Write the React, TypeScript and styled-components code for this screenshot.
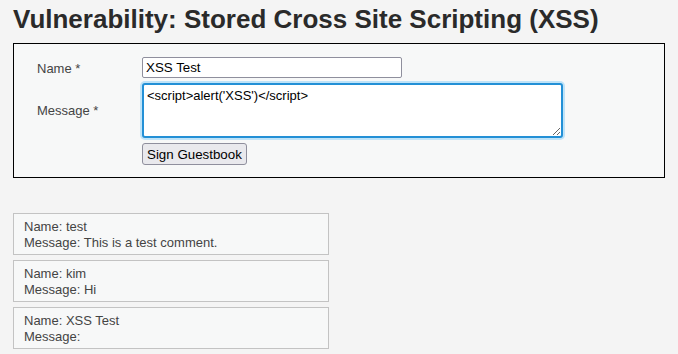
import React, { useEffect, useRef, useState } from "react";
import styled, { createGlobalStyle } from "styled-components";

const GlobalStyle = createGlobalStyle`
  body {
    margin: 0;
    background: #f4f4f4;
    font-family: "Liberation Sans", Arial, sans-serif;
    color: #333;
  }
`;

const entries = [
  { name: "test", message: "This is a test comment." },
  { name: "kim", message: "Hi" },
  { name: "XSS Test", message: "" },
];

function App() {
  const [name, setName] = useState("XSS Test");
  const [message, setMessage] = useState("<script>alert('XSS')</script>");
  const msgRef = useRef<HTMLTextAreaElement>(null);

  // caret sits at the end of the typed payload
  useEffect(() => {
    const el = msgRef.current;
    if (!el) return;
    el.focus();
    el.setSelectionRange(el.value.length, el.value.length);
  }, []);

  return (
    <>
      <GlobalStyle />
      <Page>
        <Title>Vulnerability: Stored Cross Site Scripting (XSS)</Title>

        <CodeArea>
          <FormGrid>
            <Label>Name *</Label>
            <TextInput value={name} onChange={(e) => setName(e.target.value)} />
            <Label className="msg">Message *</Label>
            <MessageBox
              ref={msgRef}
              value={message}
              onChange={(e) => setMessage(e.target.value)}
            />
            <span />
            <div>
              <SubmitBtn type="button">Sign Guestbook</SubmitBtn>
            </div>
          </FormGrid>
        </CodeArea>

        <Guestbook>
          {entries.map((entry, i) => (
            <Entry key={i}>
              Name: {entry.name}
              <br />
              Message: {entry.message}
            </Entry>
          ))}
        </Guestbook>
      </Page>
    </>
  );
}

const Page = styled.div`
  padding: 4px 13px 0 13px;
`;

const Title = styled.h1`
  margin: 0 0 8px 0;
  font-family: "Liberation Sans", Arial, sans-serif;
  font-weight: bold;
  font-size: 26px;
  line-height: 31px;
  white-space: nowrap;
  color: #2a2a2a;
`;

const CodeArea = styled.div`
  width: 652px;
  box-sizing: border-box;
  border: 1px solid #000;
  background: #f7f8f8;
  padding: 13px 0 12px 23px;
`;

const FormGrid = styled.div`
  display: grid;
  grid-template-columns: 105px auto;
  grid-row-gap: 5px;
  align-items: center;
  justify-items: start;
`;

const Label = styled.span`
  font-size: 13px;
  color: #444;
  padding-top: 1px;

  &.msg {
    padding-bottom: 2px;
  }
`;

const TextInput = styled.input`
  box-sizing: border-box;
  width: 260px;
  height: 21px;
  padding: 1px 3px;
  border: 1px solid #8f8f9d;
  border-radius: 2px;
  background: #fff;
  font-family: "Liberation Sans", Arial, sans-serif;
  font-size: 13.333px;
  color: #000;
  outline: none;
`;

const MessageBox = styled.textarea`
  box-sizing: border-box;
  width: 421px;
  height: 55px;
  padding: 3px 3px;
  border: 2px solid #2390d6;
  border-radius: 3px;
  box-shadow: 0 0 0 2px #bfe3f8;
  background: #fff;
  font-family: "Liberation Sans", Arial, sans-serif;
  font-size: 13px;
  line-height: 15px;
  color: #000;
  caret-color: #000;
  outline: none;
  resize: both;
`;

const SubmitBtn = styled.button`
  box-sizing: border-box;
  height: 22px;
  padding: 0 4px;
  border: 1px solid #8f8f9d;
  border-radius: 3px;
  background: #e9e9ed;
  font-family: "Liberation Sans", Arial, sans-serif;
  font-size: 13.333px;
  color: #000;
`;

const Guestbook = styled.div`
  display: flex;
  flex-direction: column;
  gap: 5px;
  margin-top: 35px;
`;

const Entry = styled.div`
  box-sizing: border-box;
  width: 316px;
  height: 42px;
  padding: 5px 10px;
  border: 1px solid #c3c3c3;
  background: #f7f8f8;
  font-size: 13px;
  line-height: 16px;
  color: #444;
`;

export default App;
